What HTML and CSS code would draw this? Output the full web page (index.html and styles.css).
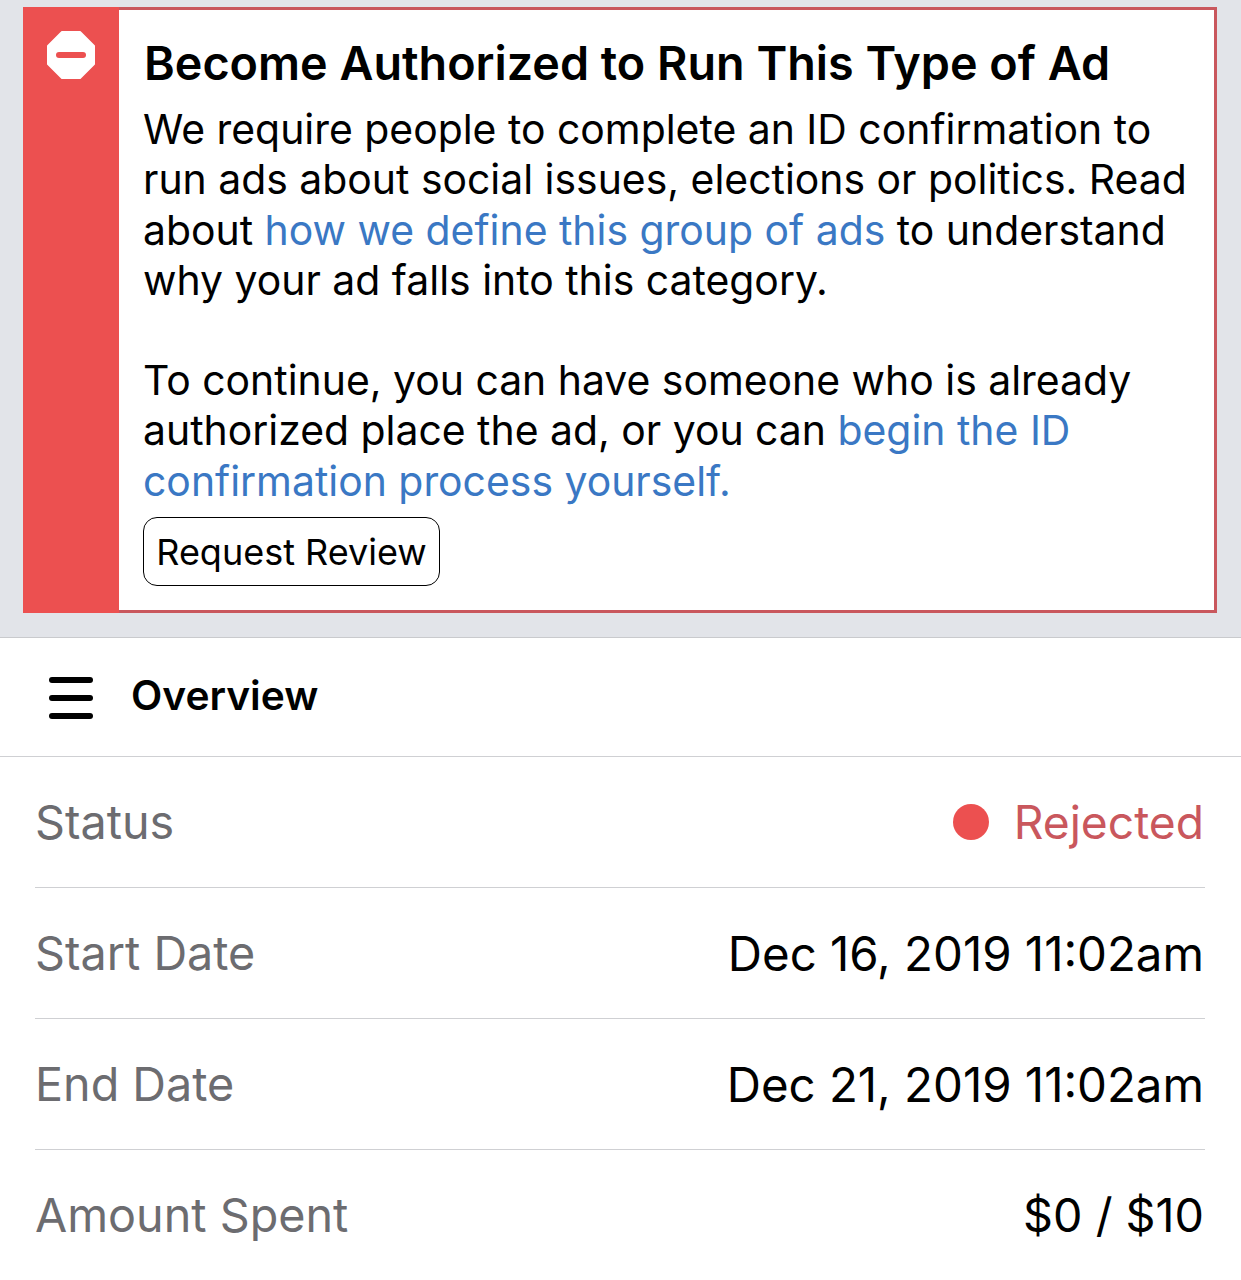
FILE: index.html
```html
<!DOCTYPE html>
<html>
<head>
  <title>Ad Overview</title>
  <link rel="stylesheet" href="styles.css">
</head>
<body>
  <div class="notice-area">
    <div class="notice">
      <div class="notice-side">
        <svg class="stop-icon" width="48" height="48" viewBox="0 0 48 48">
          <polygon points="15,1 33,1 47,15 47,33 33,47 15,47 1,33 1,15" fill="#fff" stroke="#fff" stroke-width="2" stroke-linejoin="round"/>
          <rect x="9" y="21" width="30" height="6" rx="3" fill="#ec5050"/>
        </svg>
      </div>
      <div class="notice-body">
        <h2 class="notice-title">Become Authorized to Run This Type of Ad</h2>
        <p class="notice-text">We require people to complete an ID confirmation to<br>run ads about social issues, elections or politics. Read<br>about <a href="#">how we define this group of ads</a> to understand<br>why your ad falls into this category.</p>
        <p class="notice-text notice-gap">To continue, you can have someone who is already<br>authorized place the ad, or you can <a href="#">begin the ID<br>confirmation process yourself.</a></p>
        <button class="review-button">Request Review</button>
      </div>
    </div>
  </div>

  <div class="section-header">
    <svg class="menu-icon" width="46" height="42" viewBox="0 0 46 42">
      <rect x="1" y="0" width="44" height="6" rx="3"/>
      <rect x="1" y="18" width="44" height="6" rx="3"/>
      <rect x="1" y="36" width="44" height="6" rx="3"/>
    </svg>
    <span class="section-title">Overview</span>
  </div>

  <div class="details">
    <div class="detail-row">
      <span class="detail-label">Status</span>
      <span class="detail-value status-rejected"><i class="status-dot"></i>Rejected</span>
    </div>
    <div class="detail-row">
      <span class="detail-label">Start Date</span>
      <span class="detail-value detail-date">Dec 16, 2019 11:02am</span>
    </div>
    <div class="detail-row">
      <span class="detail-label">End Date</span>
      <span class="detail-value detail-date">Dec 21, 2019 11:02am</span>
    </div>
    <div class="detail-row">
      <span class="detail-label">Amount Spent</span>
      <span class="detail-value">$0 / $10</span>
    </div>
  </div>
</body>
</html>
```

FILE: styles.css
```css
body {
  margin: 0;
  height: 1280px;
  overflow: hidden;
  background: #fff;
  color: #000;
  font-family: "Inter", "Liberation Sans", sans-serif;
}

.notice-area {
  background: #e2e4e9;
  padding: 7px 24px 24px 23px;
  border-bottom: 1px solid #c9cacd;
}

.notice {
  display: flex;
  height: 606px;
  box-sizing: border-box;
  background: #fff;
  border: 3px solid #c9575d;
}

.notice-side {
  width: 96px;
  margin: -3px 0 -3px -3px;
  background: #ec5050;
  display: flex;
  justify-content: center;
  align-items: flex-start;
}

.stop-icon {
  margin-top: 24px;
}

.notice-body {
  flex: 1;
  padding: 26px 0 0 24px;
}

.notice-title {
  margin: 0 0 14px 1px;
  font-size: 46.7px;
  line-height: 54px;
  font-weight: 600;
}

.notice-text {
  margin: 0;
  font-size: 40.9px;
  line-height: 50.3px;
}

.notice-text a {
  color: #3a78c4;
  text-decoration: none;
}

.notice-gap {
  margin-top: 50px;
}

.review-button {
  display: block;
  margin: 11px 0 0;
  width: 297px;
  height: 69px;
  padding: 0;
  background: #fff;
  border: 1px solid #000;
  border-radius: 14px;
  color: #000;
  font-family: inherit;
  font-size: 36px;
}

.section-header {
  display: flex;
  align-items: center;
  height: 118px;
  padding-left: 48px;
  border-bottom: 1px solid #cfd0d3;
}

.menu-icon {
  margin-top: 1px;
  margin-right: 37px;
}

.section-title {
  margin-bottom: 3px;
  font-size: 40.7px;
  font-weight: 600;
}

.details {
  padding: 0 36px 0 35px;
}

.detail-row {
  display: flex;
  justify-content: space-between;
  align-items: center;
  height: 130px;
  padding: 0 1px 0 0;
  border-bottom: 1px solid #cfd0d3;
  font-size: 46.7px;
}

.detail-row:last-child {
  border-bottom: none;
}

.detail-label {
  color: #6c6c70;
}

.detail-value {
  display: flex;
  align-items: center;
}

.detail-date {
  font-size: 47.4px;
}

.status-rejected {
  color: #c9575d;
  font-size: 46.2px;
}

.status-dot {
  width: 36px;
  height: 36px;
  margin-right: 25px;
  border-radius: 50%;
  background: #ec5050;
}
```
